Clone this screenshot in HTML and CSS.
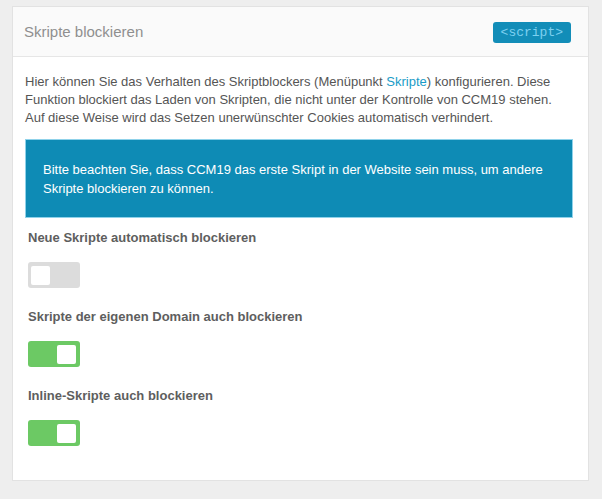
FILE: index.html
```html
<!DOCTYPE html>
<html lang="de">
<head>
<meta charset="utf-8">
<link rel="stylesheet" href="styles.css">
</head>
<body>
<div class="card">
  <div class="card-header">
    <h3 class="card-title">Skripte blockieren</h3>
    <span class="badge">&lt;script&gt;</span>
  </div>
  <div class="card-body">
    <p class="intro">Hier können Sie das Verhalten des Skriptblockers (Menüpunkt <a class="link" href="#">Skripte</a>) konfigurieren. Diese Funktion blockiert das Laden von Skripten, die nicht unter der Kontrolle von CCM19 stehen. Auf diese Weise wird das Setzen unerwünschter Cookies automatisch verhindert.</p>
    <div class="alert">Bitte beachten Sie, dass CCM19 das erste Skript in der Website sein muss, um andere Skripte blockieren zu können.</div>
    <div class="group">
      <div class="label">Neue Skripte automatisch blockieren</div>
      <span class="toggle"><span class="knob"></span></span>
    </div>
    <div class="group">
      <div class="label">Skripte der eigenen Domain auch blockieren</div>
      <span class="toggle on"><span class="knob"></span></span>
    </div>
    <div class="group">
      <div class="label">Inline-Skripte auch blockieren</div>
      <span class="toggle on"><span class="knob"></span></span>
    </div>
  </div>
</div>
</body>
</html>
```
FILE: styles.css
```css
html, body {
  margin: 0;
  padding: 0;
  background: #eeeeee;
  font-family: "Liberation Sans", Arial, sans-serif;
}
body {
  padding: 6px 13px 0 12px;
}
.card {
  background: #ffffff;
  border: 1px solid #e2e2e2;
  box-sizing: border-box;
  width: 577px;
  height: 475px;
}
.card-header {
  height: 49px;
  background: #fafafa;
  border-bottom: 1px solid #e6e6e6;
  display: flex;
  align-items: center;
  justify-content: space-between;
  padding: 0 17px 0 11px;
}
.card-title {
  margin: 0;
  font-size: 15px;
  font-weight: normal;
  color: #8f8f8f;
}
.badge {
  background: #128db8;
  color: #7dd0f0;
  font-family: "Liberation Mono", "Courier New", monospace;
  font-size: 13px;
  line-height: 21px;
  height: 21px;
  padding: 0 8px;
  border-radius: 3px;
  margin-top: 2px;
}
.card-body {
  padding: 16px 15px 0 12px;
}
.intro {
  margin: 0 0 12px 0;
  font-size: 13px;
  line-height: 18px;
  color: #555555;
}
.link {
  color: #1a9cc7;
  text-decoration: none;
}
.alert {
  background: #0e8bb5;
  border: 1px solid #8fd2ea;
  color: #ffffff;
  font-size: 13px;
  line-height: 19px;
  padding: 20px 23px 19px 17px;
}
.group {
  padding: 11px 0 0 3px;
  display: flex;
  flex-direction: column;
  align-items: flex-start;
}
.group + .group {
  padding-top: 20px;
}
.label {
  font-size: 13px;
  font-weight: bold;
  line-height: 18px;
  color: #5e5e5e;
  margin-bottom: 15px;
}
.toggle {
  display: flex;
  align-items: center;
  width: 52px;
  height: 26px;
  box-sizing: border-box;
  padding: 0 3px;
  border-radius: 3px;
  background: #dcdcdc;
}
.toggle.on {
  background: #6cc964;
  justify-content: flex-end;
  padding: 0 4px;
}
.knob {
  width: 19px;
  height: 19px;
  border-radius: 2px;
  background: #ffffff;
}
```
